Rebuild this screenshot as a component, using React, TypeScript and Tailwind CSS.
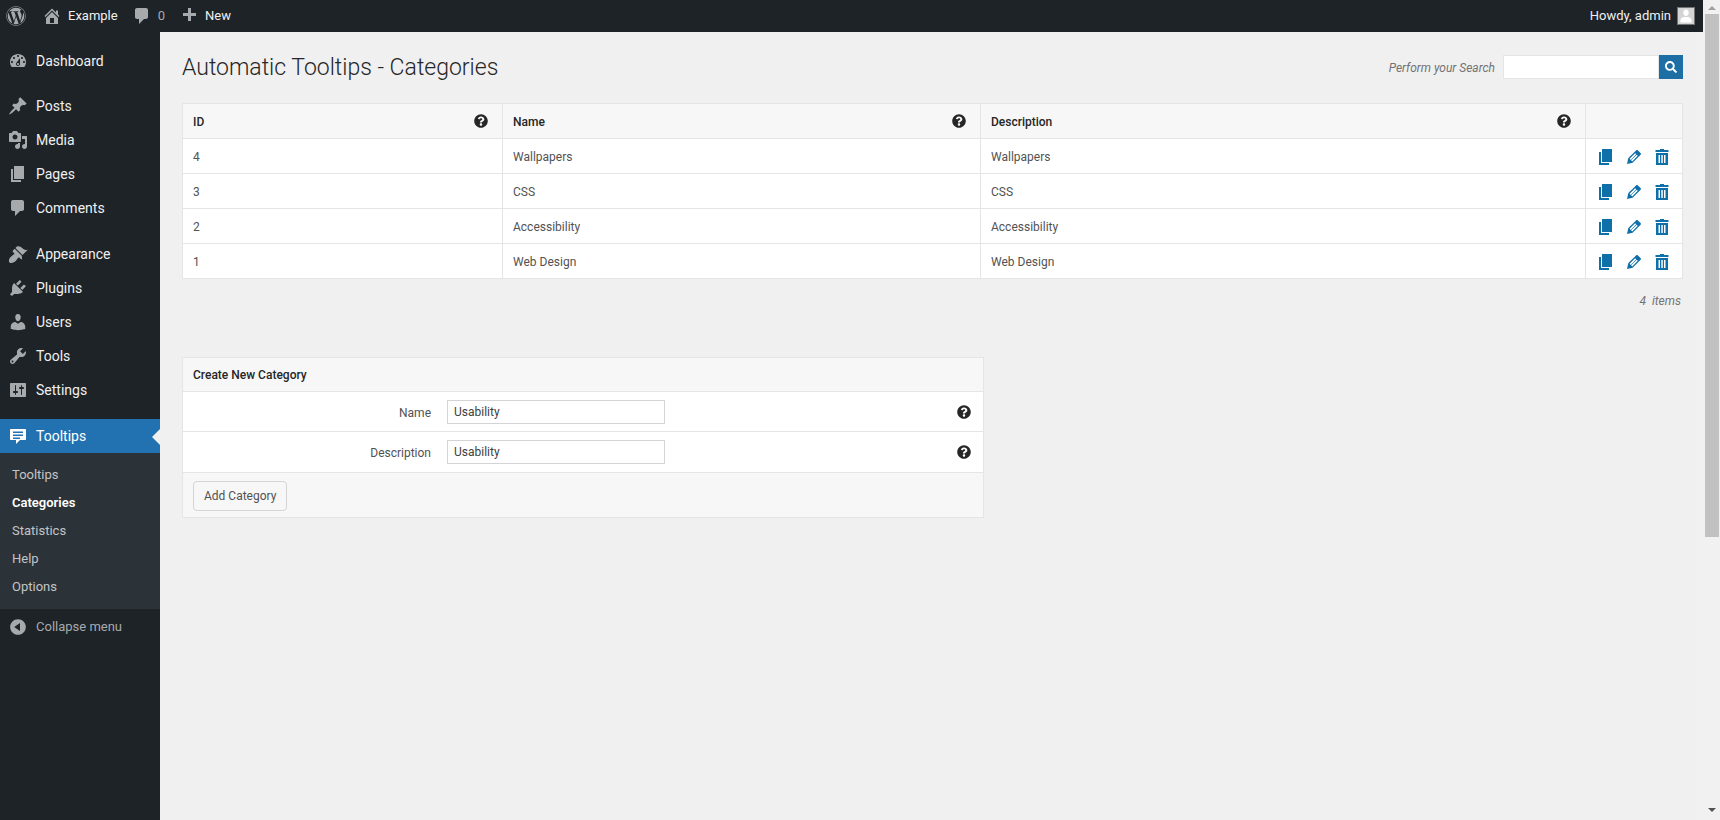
import { FaWordpress, FaQuestionCircle, FaSearch } from 'react-icons/fa';

// dashicons outlines, 20x20 box
const icons = {
  home: 'M16 8.5l1.53 1.53-1.06 1.06L10 4.62l-6.47 6.47-1.06-1.06L10 2.5l4 4v-2h2v4zm-6-2.46l6 5.99V18H4v-5.97zM12 17v-5H8v5h4z',
  comment: 'M5 2h9c1.1 0 2 .9 2 2v7c0 1.1-.9 2-2 2h-2l-5 5v-5H5c-1.1 0-2-.9-2-2V4c0-1.1.9-2 2-2z',
  plus: 'M17 7v3h-5v5H9v-5H4V7h5V2h3v5h5z',
  dashboard: 'M3.76 16h12.48c1.1-1.37 1.76-3.11 1.76-5 0-4.42-3.58-8-8-8s-8 3.58-8 8c0 1.89.66 3.63 1.76 5zM10 4c.55 0 1 .45 1 1s-.45 1-1 1-1-.45-1-1 .45-1 1-1zM6 6c.55 0 1 .45 1 1s-.45 1-1 1-1-.45-1-1 .45-1 1-1zm8 0c.55 0 1 .45 1 1s-.45 1-1 1-1-.45-1-1 .45-1 1-1zm-5.37 5.55L12 7v6c0 1.1-.9 2-2 2s-2-.9-2-2c0-.57.24-1.08.63-1.45zM4 10c.55 0 1 .45 1 1s-.45 1-1 1-1-.45-1-1 .45-1 1-1zm12 0c.55 0 1 .45 1 1s-.45 1-1 1-1-.45-1-1 .45-1 1-1zm-5 3c0-.55-.45-1-1-1s-1 .45-1 1 .45 1 1 1 1-.45 1-1z',
  post: 'M10.44 3.02l1.82-1.82 6.36 6.35-1.83 1.82c-1.05-.68-2.48-.57-3.41.36l-.75.75c-.92.93-1.04 2.35-.35 3.41l-1.83 1.82-2.41-2.41-2.8 2.79c-.42.42-3.38 2.71-3.8 2.29s1.86-3.39 2.28-3.81l2.79-2.79L4.1 9.36l1.83-1.82c1.05.69 2.48.57 3.4-.36l.75-.75c.93-.92 1.05-2.35.36-3.41z',
  media: 'M13 11V4c0-.55-.45-1-1-1h-1.67L9 1H5L3.67 3H2c-.55 0-1 .45-1 1v7c0 .55.45 1 1 1h10c.55 0 1-.45 1-1zM7 4.5c1.38 0 2.5 1.12 2.5 2.5S8.38 9.5 7 9.5 4.5 8.38 4.5 7 5.62 4.5 7 4.5zM14 6h5v10.5c0 1.38-1.12 2.5-2.5 2.5S14 17.88 14 16.5s1.12-2.5 2.5-2.5c.17 0 .34.02.5.05V9h-3V6zm-4 8.05V13h2v3.5c0 1.38-1.12 2.5-2.5 2.5S7 17.88 7 16.5 8.12 14 9.5 14c.17 0 .34.02.5.05z',
  page: 'M6 15V2h10v13H6zm-1 1h8v2H3V5h2v11z',
  appearance: 'M14.48 11.06L7.41 3.99l1.5-1.5c.5-.56 2.3-.47 3.51.32 1.21.8 1.43 1.28 2.91 2.1 1.18.64 2.45 1.26 4.45.85zm-.71.71L6.7 4.7 4.93 6.47c-.39.39-.39 1.02 0 1.41l1.06 1.06c.39.39.39 1.03 0 1.42-.6.6-1.43 1.11-2.21 1.69-.35.26-.7.53-1.01.84C1.43 13.71.05 16.9 1.53 18.4c1.53 1.46 4.69.11 6.15-1.35.31-.31.58-.66.84-1.02.57-.78 1.08-1.61 1.69-2.21.39-.39 1.02-.39 1.41 0l1.06 1.06c.39.39 1.02.39 1.41 0z',
  plugins: 'M13.11 4.36L9.87 7.6 8 5.73l3.24-3.24c.35-.34 1.05-.2 1.56.32.52.51.66 1.21.31 1.55zm-8 1.77l.91-1.12 9.01 9.01-1.19.84c-.71.71-2.63 1.16-3.82 1.16H6.14L4.9 17.26c-.59.59-1.54.59-2.12 0-.59-.58-.59-1.53 0-2.12l1.24-1.24v-3.88c0-1.13.4-3.19 1.09-3.89zm7.26 3.97l3.24-3.24c.34-.35 1.04-.21 1.55.31.52.51.66 1.21.31 1.55l-3.24 3.25z',
  users: 'M10 9.25c-2.27 0-2.73-3.44-2.73-3.44C7 4.02 7.82 2 9.97 2c2.16 0 2.98 2.02 2.71 3.81 0 0-.41 3.44-2.68 3.44zm0 2.57L12.72 10c2.39 0 4.52 2.33 4.52 4.53v2.49s-3.65 1.13-7.24 1.13c-3.65 0-7.24-1.13-7.24-1.13v-2.49c0-2.25 1.94-4.48 4.47-4.48z',
  tools: 'M16.68 9.77c-1.34 1.34-3.3 1.67-4.95.99l-5.41 6.52c-.99.99-2.59.99-3.58 0s-.99-2.59 0-3.57l6.52-5.42c-.68-1.65-.35-3.61.99-4.95 1.28-1.28 3.12-1.62 4.72-1.06l-2.89 2.89 2.82 2.82 2.86-2.87c.53 1.58.18 3.39-1.08 4.65zM3.81 16.21c.4.39 1.04.39 1.43 0 .4-.4.4-1.04 0-1.43-.39-.4-1.03-.4-1.43 0-.39.39-.39 1.03 0 1.43z',
  settings: 'M18 16V4c0-.55-.45-1-1-1H3c-.55 0-1 .45-1 1v12c0 .55.45 1 1 1h14c.55 0 1-.45 1-1zM8 11h1c.55 0 1 .45 1 1s-.45 1-1 1H8v1.5c0 .28-.22.5-.5.5s-.5-.22-.5-.5V13H6c-.55 0-1-.45-1-1s.45-1 1-1h1V5.5c0-.28.22-.5.5-.5s.5.22.5.5V11zm5-2h-1c-.55 0-1-.45-1-1s.45-1 1-1h1V5.5c0-.28.22-.5.5-.5s.5.22.5.5V7h1c.55 0 1 .45 1 1s-.45 1-1 1h-1v5.5c0 .28-.22.5-.5.5s-.5-.22-.5-.5V9z',
  tooltip: 'M3 3h14c.6 0 1 .4 1 1v9c0 .6-.4 1-1 1h-5l-4 4v-4H3c-.6 0-1-.4-1-1V4c0-.6.4-1 1-1zM5 5.5V7h10V5.5zM5 8.5V10h10V8.5zM5 11.5V13h7v-1.5z',
  collapse: 'M10 2.16c4.33 0 7.84 3.51 7.84 7.84s-3.51 7.84-7.84 7.84S2.16 14.33 2.16 10 5.71 2.16 10 2.16zm2 11.72V6.12L6.18 9.97z',
  edit: 'M13.89 3.39l2.71 2.72c.46.46.42 1.24.03 1.64l-8.01 8.02-5.56 1.16 1.16-5.58s7.6-7.63 7.99-8.03c.39-.39 1.22-.39 1.68.07zm-2.73 2.79l-5.59 5.61 1.11 1.11 5.54-5.65zm-2.97 8.23l5.58-5.6-1.07-1.08-5.59 5.6z',
  trash: 'M8 2h4v1h4.5v2h-13V3H8zM4 6h12v12H4zM6.5 8v8H8V8zM9.3 8v8h1.5V8zM12 8v8h1.5V8z',
  person: 'M10 10c-2.3 0-3.4-2.4-3.4-4.4C6.6 3.6 8 2 10 2s3.4 1.6 3.4 3.6c0 2-1.1 4.4-3.4 4.4zm-7 8v-2c0-3 3-4.6 4.4-4.6h5.2c1.4 0 4.4 1.6 4.4 4.6v2z',
};

function Dash({ name, className }: { name: keyof typeof icons; className: string }) {
  return (
    <svg viewBox="0 0 20 20" className={className} fill="currentColor">
      <path fillRule="evenodd" d={icons[name]} />
    </svg>
  );
}

const menu: { label: string; icon: keyof typeof icons; gap?: string }[] = [
  { label: 'Dashboard', icon: 'dashboard' },
  { label: 'Posts', icon: 'post', gap: 'mt-2.75' },
  { label: 'Media', icon: 'media' },
  { label: 'Pages', icon: 'page' },
  { label: 'Comments', icon: 'comment' },
  { label: 'Appearance', icon: 'appearance', gap: 'mt-3' },
  { label: 'Plugins', icon: 'plugins' },
  { label: 'Users', icon: 'users' },
  { label: 'Tools', icon: 'tools' },
  { label: 'Settings', icon: 'settings' },
];

const categories = [
  { id: 4, name: 'Wallpapers' },
  { id: 3, name: 'CSS' },
  { id: 2, name: 'Accessibility' },
  { id: 1, name: 'Web Design' },
];

function AdminBar() {
  return (
    <header className="flex h-8 shrink-0 items-center justify-between bg-[#1d2327] pl-1.5 pr-2 text-[#f0f0f1]">
      <div className="flex items-center gap-3.5">
        <FaWordpress className="size-5 text-[#a7aaad]" />
        <div className="ml-0.5 flex items-center gap-1.5">
          <Dash name="home" className="size-5 text-[#a7aaad]" />
          <span>Example</span>
        </div>
        <div className="flex items-center gap-1.5">
          <Dash name="comment" className="size-5 text-[#a7aaad]" />
          <span className="text-[#a7aaad]">0</span>
        </div>
        <div className="flex items-center gap-1.5">
          <Dash name="plus" className="size-5 text-[#a7aaad]" />
          <span>New</span>
        </div>
      </div>
      <div className="flex items-center gap-1.5">
        <span>Howdy, admin</span>
        <div className="size-4.5 overflow-hidden border border-neutral-500 bg-neutral-300">
          <Dash name="person" className="size-4 text-white" />
        </div>
      </div>
    </header>
  );
}

function Sidebar() {
  return (
    <aside className="flex w-40 shrink-0 flex-col bg-[#1d2327] pt-3 text-[#f0f0f1]">
      <nav className="text-sm">
        {menu.map((item) => (
          <a key={item.label} className={`flex h-8.5 items-center gap-2 pl-2 ${item.gap ?? ''}`}>
            <Dash name={item.icon} className="size-5 text-[#a7aaad]" />
            {item.label}
          </a>
        ))}
        <a className="relative mt-3 flex h-8.5 items-center gap-2 bg-[#2271b1] pl-2 text-white">
          <Dash name="tooltip" className="size-5" />
          Tooltips
          <span className="absolute right-0 top-2.5 border-y-8 border-r-8 border-y-transparent border-r-[#f0f0f1]" />
        </a>
      </nav>
      <div className="bg-[#2c3338] py-2 text-[#c3c4c7]">
        {['Tooltips', 'Categories', 'Statistics', 'Help', 'Options'].map((label) => (
          <a key={label} className={`flex h-7 items-center pl-3 ${label === 'Categories' ? 'font-semibold text-white' : ''}`}>
            {label}
          </a>
        ))}
      </div>
      <button className="flex h-9 items-center gap-2 pl-2 text-[#a7aaad]">
        <Dash name="collapse" className="size-5" />
        Collapse menu
      </button>
    </aside>
  );
}

function HelpIcon() {
  return <FaQuestionCircle className="size-3.5 shrink-0 text-neutral-800" />;
}

function HeadCell({ label, className }: { label: string; className: string }) {
  return (
    <div className={`flex h-8.5 items-center justify-between border-r border-neutral-200 pl-2.5 pr-3.5 font-medium text-neutral-800 ${className}`}>
      <span className="pt-0.5">{label}</span>
      <HelpIcon />
    </div>
  );
}

function CategoriesTable() {
  return (
    <div className="border border-neutral-200 bg-white text-xs">
      <div className="flex border-b border-neutral-200 bg-[#f7f7f7]">
        <HeadCell label="ID" className="w-80" />
        <HeadCell label="Name" className="w-[478px]" />
        <HeadCell label="Description" className="flex-1" />
        <div className="w-24" />
      </div>
      {categories.map((cat, i) => (
        <div key={cat.id} className={`flex text-neutral-600 ${i < categories.length - 1 ? 'border-b border-neutral-200' : ''}`}>
          <div className="flex h-8.5 w-80 items-center border-r border-neutral-200 pl-2.5 pt-0.5">{cat.id}</div>
          <div className="flex h-8.5 w-[478px] items-center border-r border-neutral-200 pl-2.5 pt-0.5">{cat.name}</div>
          <div className="flex h-8.5 flex-1 items-center border-r border-neutral-200 pl-2.5 pt-0.5">{cat.name}</div>
          <div className="flex h-8.5 w-24 items-center justify-center gap-2 pt-0.5 text-[#0f6fa8]">
            <Dash name="page" className="size-5" />
            <Dash name="edit" className="size-5" />
            <Dash name="trash" className="size-5" />
          </div>
        </div>
      ))}
    </div>
  );
}

function FormRow({ label, value, height }: { label: string; value: string; height: string }) {
  return (
    <div className={`flex items-center border-b border-neutral-200 bg-white pr-3 ${height}`}>
      <label className="w-64 pr-2 pt-0.5 text-right text-neutral-600">{label}</label>
      <input
        readOnly
        value={value}
        className="ml-2 h-6 w-[218px] border border-neutral-300 bg-white px-1.5 text-neutral-700 outline-none"
      />
      <div className="ml-auto">
        <HelpIcon />
      </div>
    </div>
  );
}

export default function App() {
  return (
    <div className="flex h-screen overflow-hidden bg-[#f0f0f1] font-[Roboto,sans-serif] text-[13px]">
      <div className="flex min-w-0 flex-1 flex-col">
        <AdminBar />
        <div className="flex min-h-0 flex-1">
          <Sidebar />
          <main className="min-w-0 flex-1 pl-5.5 pr-5 pt-[19px]">
            <div className="mb-5 flex h-8 items-center justify-between">
              <h1 className="pt-0.5 text-[23px] font-light text-neutral-800">Automatic Tooltips - Categories</h1>
              <div className="flex items-center gap-2">
                <span className="pt-0.5 text-xs italic text-neutral-500">Perform your Search</span>
                <div className="flex">
                  <input readOnly className="h-6 w-39 border border-neutral-200 bg-white outline-none" />
                  <button className="flex size-6 items-center justify-center bg-[#1c6ea4] text-white">
                    <FaSearch className="size-3" />
                  </button>
                </div>
              </div>
            </div>
            <CategoriesTable />
            <p className="mt-2.5 pr-0.5 pt-0.5 text-right text-xs leading-5 italic text-neutral-500">4&nbsp; items</p>
            <section className="mt-11.5 w-[802px] border border-neutral-200 text-xs">
              <div className="flex h-8.5 items-center border-b border-neutral-200 bg-[#f7f7f7] pl-2.5 font-medium text-neutral-800">
                Create New Category
              </div>
              <FormRow label="Name" value="Usability" height="h-10" />
              <FormRow label="Description" value="Usability" height="h-10.25" />
              <div className="bg-[#f7f7f7] pb-1.5 pl-2.5 pt-2">
                <button className="block h-7.5 rounded-sm border border-neutral-300 bg-[#f7f7f7] px-2.5 text-neutral-600">
                  Add Category
                </button>
              </div>
            </section>
          </main>
        </div>
      </div>
      <div className="flex w-[17px] shrink-0 flex-col items-center justify-between bg-[#f1f1f1] pb-2 pt-1.5">
        <div className="flex flex-col items-center gap-1">
          <span className="border-x-4 border-b-4 border-x-transparent border-b-neutral-400" />
          <div className="h-[523px] w-3.5 bg-[#c1c1c1]" />
        </div>
        <span className="border-x-4 border-t-4 border-x-transparent border-t-neutral-600" />
      </div>
    </div>
  );
}
